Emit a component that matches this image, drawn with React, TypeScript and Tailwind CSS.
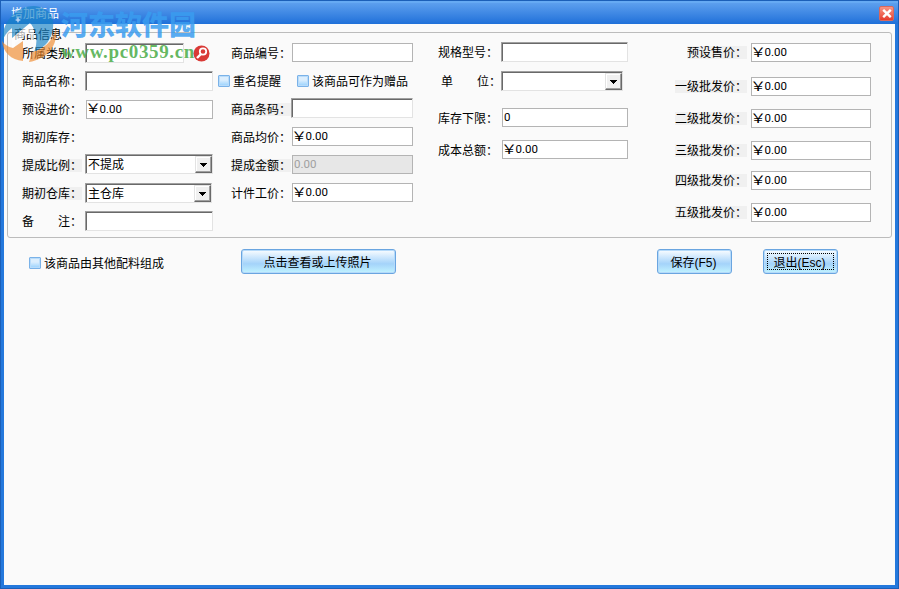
import React from "react";
import { clsx } from "clsx";

const CJK = "font-['Liberation_Sans','Noto_Sans_CJK_SC',sans-serif]";

type LabelProps = { text: string; shaded?: boolean; className?: string };

const Label = ({ text, shaded, className }: LabelProps) => (
  <span
    className={clsx(
      "block h-[13px] shrink-0 whitespace-pre text-[12px] leading-[15px] text-black",
      shaded && "bg-[#f0f0f0]",
      className
    )}
  >
    {text}
  </span>
);

const Money = ({ value = "0.00" }: { value?: string }) => (
  <>
    <span className="w-3 scale-x-135 text-[12px] leading-[16px]">￥</span>
    <span className="mb-px ml-[0.5px] font-['Roboto',sans-serif] text-[11.5px] leading-[16px]">{value}</span>
  </>
);

type FieldProps = { className?: string; children?: React.ReactNode };

const Flat = ({ className, children }: FieldProps) => (
  <div className={clsx("flex h-[19px] shrink-0 items-center border border-[#b4b4b4] bg-white", className)}>
    {children}
  </div>
);

const Sunken = ({ className, children }: FieldProps) => (
  <div
    className={clsx(
      "flex h-[20px] shrink-0 border border-t-[#a0a0a0] border-r-[#e3e3e3] border-b-[#e3e3e3] border-l-[#a0a0a0] bg-white shadow-[inset_1px_1px_0_#696969]",
      className
    )}
  >
    {children}
  </div>
);

const Combo = ({ value, className }: { value?: string; className?: string }) => (
  <Sunken className={clsx("items-center justify-between pl-[2px]", className)}>
    <span className="mt-[2px] text-[12px] leading-[16px]">{value}</span>
    <span className="mt-px flex h-[17px] w-[17px] items-center justify-center border border-t-[#e3e3e3] border-r-[#696969] border-b-[#696969] border-l-[#e3e3e3] bg-[#f0f0f0] shadow-[inset_-1px_-1px_0_#a0a0a0,inset_1px_1px_0_#fff]">
      <svg width="7" height="4" viewBox="0 0 7 4" shapeRendering="crispEdges">
        <path d="M0 0H7V1H6V2H5V3H4V4H3V3H2V2H1V1H0Z" />
      </svg>
    </span>
  </Sunken>
);

const Check = ({ text, className }: { text: string; className?: string }) => (
  <div className={clsx("flex items-center gap-[3px]", className)}>
    <span className="h-3 w-3 rounded-[1px] border border-[#7ab2e8] bg-linear-to-b from-[#dceefd] from-40% to-[#94d0fd] shadow-[inset_0_0_0_1px_#b9dcfa]" />
    <Label text={text} />
  </div>
);

type ButtonProps = { text: string; focused?: boolean; className?: string };

const Button = ({ text, focused, className }: ButtonProps) => (
  <button
    className={clsx(
      "flex h-[25px] items-center justify-center rounded-[3px] border border-[#6aa5e0] bg-linear-to-b from-[#fafdff] via-[#a4d3fa] via-60% to-[#c2f4ff] p-[3px] text-[12px] leading-none text-black shadow-[inset_0_0_0_1px_#b5dafa]",
      className
    )}
  >
    <span
      className={clsx(
        "flex h-full w-full items-center justify-center border border-dotted pt-[2px] pr-[2px]",
        focused ? "border-black" : "border-transparent"
      )}
    >
      {text}
    </span>
  </button>
);

const Row = ({ className, children }: FieldProps) => (
  <div className={clsx("flex h-7 items-center", className)}>{children}</div>
);

const prices = [
  { label: "预设售价：", row: "h-[19px]" },
  { label: "一级批发价：", row: "mt-[15px] h-[19px]" },
  { label: "二级批发价：", row: "mt-[13px] h-[19px]" },
  { label: "三级批发价：", row: "mt-[13px] h-[19px]" },
  { label: "四级批发价：", row: "mt-[11px] h-[19px]" },
  { label: "五级批发价：", row: "mt-[13px] h-[19px]" },
];

const Watermark = () => (
  <div className="pointer-events-none absolute top-0 left-0 flex h-[66px] w-[210px]">
    <svg className="shrink-0 opacity-65" width="58" height="66" viewBox="0 0 58 66">
      <path d="M1 41C1 22 14 5 33 5C47 6 54 15 52 27C51 38 44 47 33 51C37 42 36 31 30 23L11 38V27C6 31 3 35 1 41Z" fill="#1783c6" />
      <path d="M11 37L29 22C34 29 34 35 32 43L27 32L14 42V50L11 46Z" fill="#fff" />
      <path d="M1 40C3 43 7 46 12 47L22 40V60C10 59 2 51 1 40Z" fill="#f08a2c" />
      <path d="M55 28C57 44 47 58 28 61L31 51C43 48 51 41 55 28Z" fill="#f08a2c" />
      <path d="M17 16l1 2 2 1-2 1-1 2-1-2-2-1 2-1Z" fill="#fff" />
    </svg>
    <div className="pt-[8px] pl-[2px]">
      <p className="h-[30px] whitespace-nowrap font-['Noto_Sans_CJK_SC',sans-serif] text-[27px] leading-[30px] font-black text-[#3a9df0]/85">
        河东软件园
      </p>
      <p className="font-['Liberation_Serif',serif] text-[19px] leading-[26px] font-bold tracking-[0.65px] text-[#4aac46]/85">
        www.pc0359.cn
      </p>
    </div>
  </div>
);

const App = () => {
  return (
    <div
      className={clsx(
        "relative flex h-[589px] w-[899px] flex-col overflow-hidden border border-[#1b5fb8] bg-[#2478dc] text-black",
        CJK
      )}
    >
      <header className="flex h-[23px] shrink-0 items-center justify-between border-t-2 border-[#66aaf3] bg-linear-to-b from-[#5c9fee] to-[#1e70d9] pr-1 pl-[10px]">
        <h1 className="text-[12px] leading-[16px] text-white">增加商品</h1>
        <span className="-mt-px flex h-[15px] w-[15px] items-center justify-center rounded-[2px] border border-[#d9685d] bg-linear-to-b from-[#f79585] to-[#e5392c]">
          <svg width="10" height="9" viewBox="0 0 10 9">
            <path d="M1.2 .8L8.8 8.2M8.8 .8L1.2 8.2" stroke="#fff" strokeWidth="2.4" />
          </svg>
        </span>
      </header>

      <main className="mx-[3px] mb-[3px] flex-1 bg-[#fafafa]">
        <fieldset className="mt-2 ml-[3px] flex h-[206px] w-[885px] rounded-[3px] border border-[#bcbcbc] pt-[6px] pl-[14px]">
          <div className="w-[195px]">
            <Row>
              <Label text="所属类别：" className="w-[63px]" />
              <Sunken className="w-[99px]" />
              <svg className="ml-[9px]" width="17" height="17" viewBox="0 0 17 17">
                <circle cx="8.5" cy="8.5" r="8" fill="#d93a36" />
                <circle cx="10" cy="6.5" r="3.2" fill="#d93a36" stroke="#fff" strokeWidth="1.8" />
                <path d="M8 9L4 13" stroke="#fff" strokeWidth="2.4" />
              </svg>
            </Row>
            <Row>
              <Label text="商品名称：" className="w-[63px]" />
              <Sunken className="w-[128px]" />
            </Row>
            <Row>
              <Label text="预设进价：" className="w-[64px]" />
              <Flat className="w-[127px]">
                <Money />
              </Flat>
            </Row>
            <Row>
              <Label text="期初库存：" />
            </Row>
            <Row>
              <Label text="提成比例：" shaded className="mr-[3px] w-[60px]" />
              <Combo value="不提成" className="-mt-[2px] w-[128px]" />
            </Row>
            <Row>
              <Label text="期初仓库：" shaded className="mr-[3px] w-[60px]" />
              <Combo value="主仓库" className="w-[127px]" />
            </Row>
            <Row>
              <Label text="备　　注：" className="w-[63px]" />
              <Sunken className="w-[128px]" />
            </Row>
          </div>

          <div className="w-[221px]">
            <Row className="pl-[14px]">
              <Label text="商品编号：" className="w-[61px]" />
              <Flat className="-mt-px w-[121px]" />
            </Row>
            <Row className="gap-4 pl-px">
              <Check text="重名提醒" />
              <Check text="该商品可作为赠品" />
            </Row>
            <Row className="pl-[14px]">
              <Label text="商品条码：" shaded className="w-[60px]" />
              <Sunken className="-mt-[2px] w-[122px]" />
            </Row>
            <Row className="pl-[14px]">
              <Label text="商品均价：" className="w-[61px]" />
              <Flat className="-mt-px w-[121px]">
                <Money />
              </Flat>
            </Row>
            <Row className="pl-[14px]">
              <Label text="提成金额：" shaded className="mr-px w-[60px]" />
              <Flat className="-mt-px w-[121px] bg-[#e7e7e7]! pl-px">
                <span className="mb-px font-['Roboto',sans-serif] text-[11.5px] leading-[16px] text-[#a0a0a0]">0.00</span>
              </Flat>
            </Row>
            <Row className="pl-[14px]">
              <Label text="计件工价：" className="w-[61px]" />
              <Flat className="-mt-px w-[121px]">
                <Money />
              </Flat>
            </Row>
          </div>

          <div className="w-[236px]">
            <Row className="-mt-px">
              <Label text="规格型号：" className="w-[63px]" />
              <Sunken className="w-[127px]" />
            </Row>
            <Row className="mt-px">
              <Label text="单　　位：" className="ml-[3px] w-[60px]" />
              <Combo className="w-[122px]" />
            </Row>
            <Row className="mt-[9px]">
              <Label text="库存下限：" className="w-[64px]" />
              <Flat className="-mt-px w-[126px] pl-px">
                <span className="mb-px font-['Roboto',sans-serif] text-[11.5px] leading-[16px]">0</span>
              </Flat>
            </Row>
            <Row className="mt-1">
              <Label text="成本总额：" className="w-[64px]" />
              <Flat className="-mt-px w-[126px]">
                <Money />
              </Flat>
            </Row>
          </div>

          <div className="w-[197px] pt-1">
            {prices.map(({ label, row }) => (
              <div key={label} className={clsx("flex items-center justify-end gap-1", row)}>
                <Label text={label} shaded />
                <Flat className="w-[120px]">
                  <Money />
                </Flat>
              </div>
            ))}
          </div>
        </fieldset>

        <div className="mt-[11px] flex items-center pl-[25px]">
          <Check text="该商品由其他配料组成" className="mt-[3px] w-[212px]" />
          <Button text="点击查看或上传照片" className="w-[155px]" />
          <Button text="保存(F5)" className="ml-[261px] w-[75px]" />
          <Button text="退出(Esc)" focused className="ml-[31px] w-[75px]" />
        </div>
      </main>

      <span className="absolute top-[26px] left-[13px] bg-[#fafafa]/60 text-[12px] leading-[16px] text-black">
        商品信息
      </span>
      <Watermark />
    </div>
  );
};

export default App;
